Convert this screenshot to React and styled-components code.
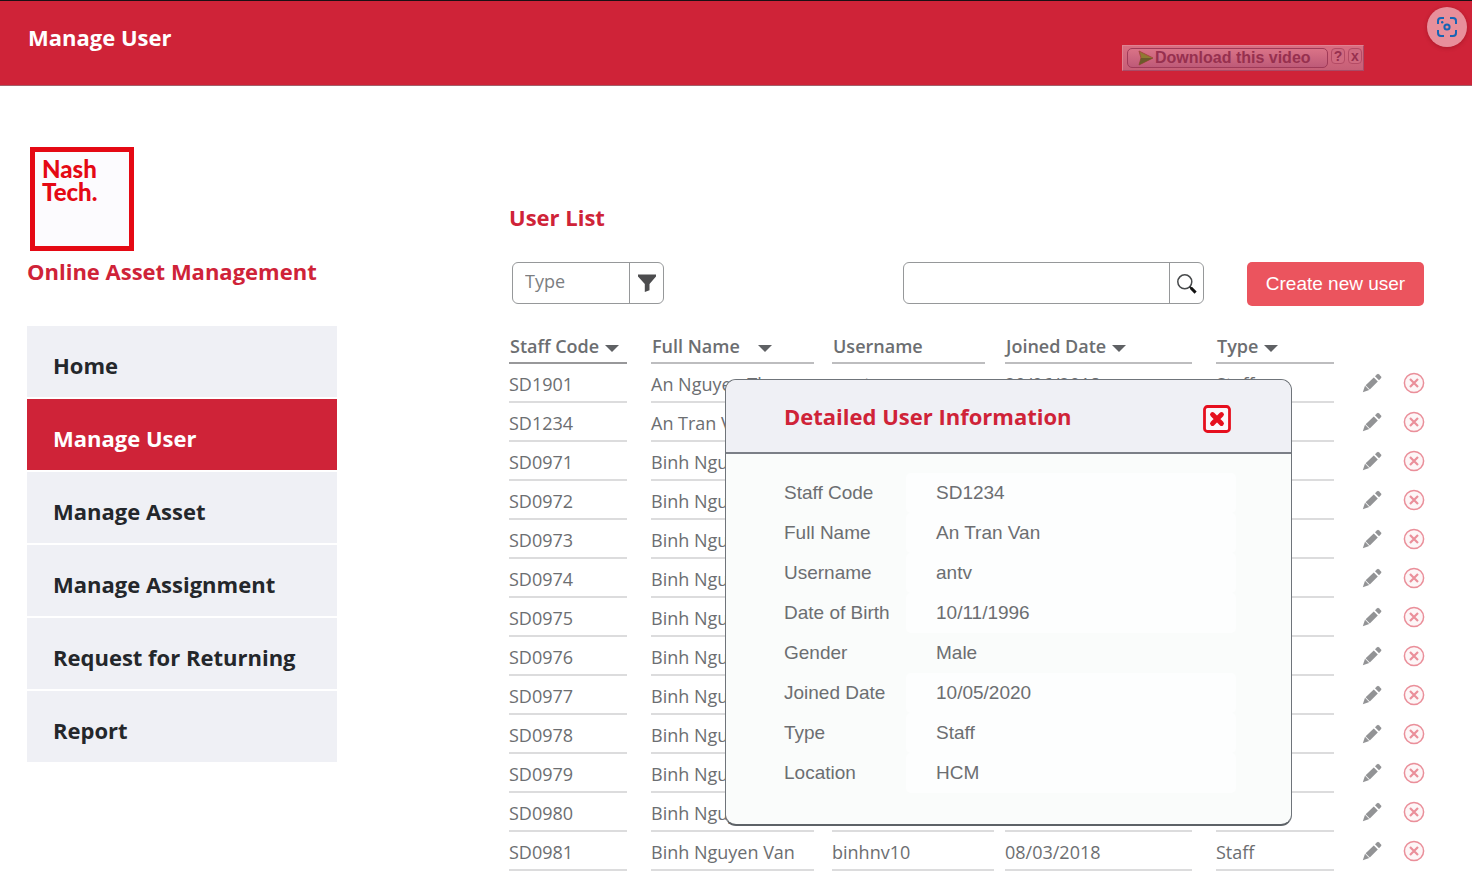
import React from 'react';
import styled, { createGlobalStyle } from 'styled-components';

const RED = '#cf2338';

const GlobalStyle = createGlobalStyle`
  * { box-sizing: border-box; }
  body {
    margin: 0;
    background: #fff;
    color: #6c6e71;
    font-family: "Open Sans", "Noto Sans", sans-serif;
    font-size: 18px;
  }
  button, input, select { font: inherit; color: inherit; }
  button { cursor: pointer; }
`;

const TopBar = styled.header`
  display: flex;
  align-items: flex-start;
  height: 86px;
  padding: 6px 5px 0 28px;
  background: ${RED};
  border-top: 1px solid #1a1014;
  border-bottom: 1px solid #a3606a;
`;

const PageTitle = styled.h1`
  flex: 1;
  margin: 15px 0 0;
  color: #fff;
  font-size: 22px;
  line-height: 30px;
  font-weight: 700;
`;

const VideoBar = styled.div`
  display: flex;
  align-items: flex-start;
  gap: 3px;
  height: 26px;
  margin: 38px 63px 0 0;
  padding: 2px 1px 2px 4px;
  background: linear-gradient(#d96e82, #c65f77);
  border: 1px solid;
  border-color: #de8391 #a94b66 #a94b66 #de8391;
  color: #97304f;
  font-family: "Liberation Sans", sans-serif;
  font-weight: 700;
`;

const VideoButton = styled.button`
  display: flex;
  align-items: center;
  width: 201px;
  height: 20px;
  padding: 0 8px;
  border: 1px solid #a03a58;
  border-radius: 5px;
  background: linear-gradient(#da7387, #be5a78);
  font-size: 16px;
  line-height: 18px;
  white-space: nowrap;
`;

const TinyButton = styled.button`
  width: 14px;
  height: 16px;
  padding: 0;
  border: 1px solid #b44b65;
  border-radius: 4px;
  background: #d06a80;
  font-size: 14px;
  line-height: 14px;
`;

const LensButton = styled.button`
  display: flex;
  align-items: center;
  justify-content: center;
  width: 40px;
  height: 40px;
  padding: 0;
  border: 0;
  border-radius: 50%;
  background: #e88f9b;
  box-shadow: 0 1px 4px rgba(90, 0, 10, 0.3);
`;

const Layout = styled.div`
  display: flex;
  align-items: flex-start;
  padding: 61px 47px 0 27px;
`;

const Sidebar = styled.aside`
  flex: none;
  width: 310px;
  margin-right: 172px;
`;

const Logo = styled.div`
  width: 104px;
  height: 104px;
  margin-left: 3px;
  padding: 5px 7px;
  border: 5px solid #e50914;
  background: #fcfbfe;
  color: #e50914;
  font-family: Lato, sans-serif;
  font-size: 24px;
  line-height: 23px;
  font-weight: 900;
`;

const Brand = styled.p`
  margin: 5px 0 40px;
  color: ${RED};
  font-size: 22px;
  line-height: 30px;
  font-weight: 700;
  white-space: nowrap;
`;

const Menu = styled.nav`
  display: flex;
  flex-direction: column;
  gap: 2px;
`;

const MenuLink = styled.a`
  display: block;
  height: 71px;
  padding: 24px 26px 0;
  background: ${(p) => (p.$active ? RED : '#eff0f5')};
  color: ${(p) => (p.$active ? '#fff' : '#24272b')};
  font-size: 22px;
  line-height: 30px;
  font-weight: 700;
  text-decoration: none;
`;

const Content = styled.main`
  flex: 1;
  min-width: 0;
  padding-top: 55px;
`;

const SectionTitle = styled.h2`
  margin: 0;
  color: ${RED};
  font-size: 22px;
  line-height: 30px;
  font-weight: 700;
`;

const Toolbar = styled.div`
  display: flex;
  align-items: flex-start;
  margin: 30px 0 20px;
  padding: 0 1px 0 3px;
`;

const FieldGroup = styled.div`
  display: flex;
  width: ${(p) => p.$width};
  height: 42px;
  margin-left: ${(p) => (p.$end ? 'auto' : '0')};
  border: 1px solid #96989a;
  border-radius: 6px;
`;

const TypeSelect = styled.select`
  flex: 1;
  min-width: 0;
  padding: 0 12px 4px;
  border: 0;
  background: transparent;
  appearance: none;
  color: #7c7e81;
`;

const SearchInput = styled.input`
  flex: 1;
  min-width: 0;
  padding: 0 12px;
  border: 0;
  background: transparent;
`;

const FieldButton = styled.button`
  display: flex;
  align-items: center;
  justify-content: center;
  width: 34px;
  padding: 0;
  border: 0;
  border-left: 1px solid #96989a;
  background: transparent;
`;

const CreateButton = styled.button`
  width: 177px;
  height: 44px;
  margin-left: 43px;
  padding: 0;
  border: 0;
  border-radius: 5px;
  background: #eb545e;
  color: #fff;
  font-family: "Liberation Sans", sans-serif;
  font-size: 19px;
  white-space: nowrap;
`;

const TableArea = styled.div`
  position: relative;
`;

const Table = styled.table`
  width: 100%;
  table-layout: fixed;
  border-collapse: collapse;
  th, td { padding: 0; text-align: left; font-weight: 400; }
`;

const HeadCell = styled.div`
  display: flex;
  align-items: center;
  height: 38px;
  margin-right: ${(p) => p.$gap}px;
  padding: 4px 0 0 1px;
  border-bottom: 2px solid ${(p) => (p.$sorted ? '#98989a' : '#bdbdbf')};
  font-weight: 600;
  white-space: nowrap;
`;

const SortButton = styled.button`
  display: flex;
  align-items: center;
  gap: ${(p) => (p.$wide ? 18 : 6)}px;
  padding: 0;
  border: 0;
  background: transparent;
  font-weight: 600;
`;

const Caret = styled.span`
  margin-top: 4px;
  border: 7px solid transparent;
  border-top-color: #5f6164;
  border-bottom: 0;
`;

const Cell = styled.div`
  height: 39px;
  margin-right: ${(p) => p.$gap}px;
  padding-top: 7px;
  border-bottom: 2px solid #dcdcdd;
  line-height: 26px;
  white-space: nowrap;
`;

const Actions = styled.div`
  display: flex;
  align-items: center;
  justify-content: space-between;
  height: 39px;
  padding-bottom: 2px;
`;

const IconButton = styled.button`
  display: flex;
  padding: 0;
  border: 0;
  background: transparent;
`;

const Dialog = styled.section`
  position: absolute;
  top: 53px;
  left: 216px;
  width: 567px;
  height: 447px;
  border: 1px solid #6f747a;
  border-bottom: 2px solid #5d6267;
  border-radius: 11px;
  background: #fafcfb;
  overflow: hidden;
`;

const DialogHead = styled.div`
  display: flex;
  align-items: flex-end;
  justify-content: space-between;
  height: 74px;
  padding: 0 60px 19px 58px;
  border-bottom: 2px solid #7b7f87;
  background: #eff0f5;
`;

const DialogTitle = styled.h2`
  margin: 0;
  color: ${RED};
  font-size: 22px;
  line-height: 34px;
  font-weight: 700;
`;

const Details = styled.dl`
  display: grid;
  grid-template-columns: 122px 330px;
  grid-auto-rows: 40px;
  margin: 19px 0 0 58px;
  font-family: "Liberation Sans", sans-serif;
  font-size: 19px;
  line-height: 40px;
`;

const Value = styled.dd`
  margin: 0;
  padding-left: 30px;
  border-radius: 5px;
  background: ${(p) => (p.$plain ? 'transparent' : '#fdfefe')};
`;

const PlayIcon = () => (
  <svg width="19" height="16" viewBox="0 0 19 16" aria-hidden="true">
    <path d="M3 1 17 8 3 15 5 8Z" fill="#8f7a32" stroke="#a5483f" strokeWidth="1" />
    <path d="M5 8h12L3 15Z" fill="#6c5a2b" />
  </svg>
);

const LensIcon = () => (
  <svg width="22" height="22" viewBox="0 0 22 22" fill="none" stroke="#1764b4" strokeWidth="2" aria-hidden="true">
    <path d="M2 8V5a3 3 0 0 1 3-3h3M14 2h3a3 3 0 0 1 3 3v3M20 14v3a3 3 0 0 1-3 3h-3M8 20H5a3 3 0 0 1-3-3v-3" />
    <circle cx="11" cy="11" r="2.6" />
    <circle cx="6.2" cy="6.2" r="1.2" fill="#1764b4" stroke="none" />
  </svg>
);

const FunnelIcon = () => (
  <svg width="20" height="20" viewBox="0 0 20 20" aria-hidden="true">
    <path d="M1 1.5h18v2L12.5 11v6.2L7.8 19v-8L1 3.5Z" fill="#4c4c4e" />
  </svg>
);

const SearchIcon = () => (
  <svg width="22" height="22" viewBox="0 0 22 22" fill="none" aria-hidden="true">
    <circle cx="8.8" cy="9.8" r="7" stroke="#47494b" strokeWidth="1.5" />
    <path d="m13.600 14.600 2 2" stroke="#222" strokeWidth="1.6" />
    <path d="m14.800 15.800 4.800 4.800" stroke="#111" strokeWidth="3" />
  </svg>
);

const PencilIcon = () => (
  <svg width="20" height="20" viewBox="0 0 20 20" fill="#929395" aria-hidden="true">
    <path d="M.8 19.2 3 12.8l4.2 4.2Z" />
    <path d="m3.600 12.200 8.200-7.800 4 4L7.800 16.400Z" />
    <path d="m13 3.3 2.2-2.1q.8-.7 1.6 0l2.3 2.2q.7.8 0 1.6L17 7.2Z" />
  </svg>
);

const RemoveIcon = () => (
  <svg width="22" height="22" viewBox="0 0 22 22" fill="none" stroke="#ea8f9a" aria-hidden="true">
    <circle cx="11" cy="11" r="9.6" fill="#fdf6f7" strokeWidth="1.5" />
    <path d="m7 7 8 8M15 7l-8 8" strokeWidth="2.2" />
  </svg>
);

const CloseIcon = () => (
  <svg width="28" height="28" viewBox="0 0 28 28" fill="none" stroke="#e60f1e" aria-hidden="true">
    <rect x="1.5" y="1.5" width="25" height="25" rx="3" fill="#fbf6fa" strokeWidth="2.8" />
    <path d="m9.5 9.5 9 9M18.5 9.5l-9 9" strokeWidth="4.8" strokeLinecap="round" />
  </svg>
);

const menu = ['Home', 'Manage User', 'Manage Asset', 'Manage Assignment', 'Request for Returning', 'Report'];

const columns = [
  { key: 'code', label: 'Staff Code', width: 142, gap: 24, sortable: true, sorted: true },
  { key: 'name', label: 'Full Name', width: 181, gap: 18, sortable: true, wide: true },
  { key: 'username', label: 'Username', width: 173, gap: 11, headGap: 20 },
  { key: 'joined', label: 'Joined Date', width: 211, gap: 24, sortable: true },
  { key: 'type', label: 'Type', width: 146, gap: 28, sortable: true },
];

const users = [
  { code: 'SD1901', name: 'An Nguyen Thuy', username: 'annt', joined: '20/06/2018', type: 'Staff' },
  { code: 'SD1234', name: 'An Tran Van' },
  ...Array.from({ length: 10 }, (_, i) => ({ code: `SD0${971 + i}`, name: 'Binh Nguyen' })),
  { code: 'SD0981', name: 'Binh Nguyen Van', username: 'binhnv10', joined: '08/03/2018', type: 'Staff' },
];

const details = [
  ['Staff Code', 'SD1234'],
  ['Full Name', 'An Tran Van'],
  ['Username', 'antv'],
  ['Date of Birth', '10/11/1996'],
  ['Gender', 'Male'],
  ['Joined Date', '10/05/2020'],
  ['Type', 'Staff'],
  ['Location', 'HCM'],
];

export default function App() {
  return (
    <>
      <GlobalStyle />
      <TopBar>
        <PageTitle>Manage User</PageTitle>
        <VideoBar>
          <VideoButton type="button"><PlayIcon />Download this video</VideoButton>
          <TinyButton type="button">?</TinyButton>
          <TinyButton type="button">x</TinyButton>
        </VideoBar>
        <LensButton type="button" aria-label="Visual search"><LensIcon /></LensButton>
      </TopBar>
      <Layout>
        <Sidebar>
          <Logo>Nash<br />Tech.</Logo>
          <Brand>Online Asset Management</Brand>
          <Menu>
            {menu.map((item) => (
              <MenuLink key={item} href="#" $active={item === 'Manage User'}>{item}</MenuLink>
            ))}
          </Menu>
        </Sidebar>
        <Content>
          <SectionTitle>User List</SectionTitle>
          <Toolbar>
            <FieldGroup $width="152px">
              <TypeSelect aria-label="Type"><option>Type</option></TypeSelect>
              <FieldButton type="button" aria-label="Filter"><FunnelIcon /></FieldButton>
            </FieldGroup>
            <FieldGroup $width="301px" $end>
              <SearchInput type="text" aria-label="Search users" />
              <FieldButton type="button" aria-label="Search"><SearchIcon /></FieldButton>
            </FieldGroup>
            <CreateButton type="button">Create new user</CreateButton>
          </Toolbar>
          <TableArea>
            <Table>
              <colgroup>
                {columns.map((c) => <col key={c.key} width={c.width} />)}
                <col width={63} />
              </colgroup>
              <thead>
                <tr>
                  {columns.map((c) => (
                    <th key={c.key} scope="col">
                      <HeadCell $gap={c.headGap || c.gap} $sorted={c.sorted}>
                        {c.sortable
                          ? <SortButton type="button" $wide={c.wide}>{c.label}<Caret /></SortButton>
                          : c.label}
                      </HeadCell>
                    </th>
                  ))}
                  <td />
                </tr>
              </thead>
              <tbody>
                {users.map((u) => (
                  <tr key={u.code}>
                    {columns.map((c) => (
                      <td key={c.key}><Cell $gap={c.gap}>{u[c.key]}</Cell></td>
                    ))}
                    <td>
                      <Actions>
                        <IconButton type="button" aria-label={`Edit ${u.code}`}><PencilIcon /></IconButton>
                        <IconButton type="button" aria-label={`Disable ${u.code}`}><RemoveIcon /></IconButton>
                      </Actions>
                    </td>
                  </tr>
                ))}
              </tbody>
            </Table>
            <Dialog role="dialog" aria-labelledby="dialog-title">
              <DialogHead>
                <DialogTitle id="dialog-title">Detailed User Information</DialogTitle>
                <IconButton type="button" aria-label="Close"><CloseIcon /></IconButton>
              </DialogHead>
              <Details>
                {details.map(([label, value]) => (
                  <React.Fragment key={label}>
                    <dt>{label}</dt>
                    <Value $plain={label === 'Gender'}>{value}</Value>
                  </React.Fragment>
                ))}
              </Details>
            </Dialog>
          </TableArea>
        </Content>
      </Layout>
    </>
  );
}
